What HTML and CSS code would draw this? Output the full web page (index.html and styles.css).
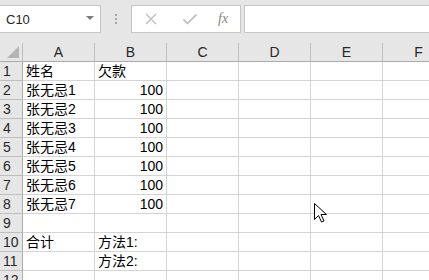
FILE: index.html
```html
<!DOCTYPE html>
<html lang="zh-CN">
  <head>
    <meta charset="UTF-8" />
    <title>Sheet</title>
    <link rel="stylesheet" href="styles.css">
  </head>
  <body>
    <div class="toolbar">
      <div class="namebox">
        <span>C10</span>
        <svg class="drop" width="8" height="5" viewBox="0 0 8 5"><path d="M0 0H8L4 4Z" fill="#7a7a7a"/></svg>
      </div>
      <div class="dots"><i></i><i></i><i></i></div>
      <div class="fx-buttons">
        <svg width="14" height="14" viewBox="0 0 14 14"><path d="M2 2L12 12M12 2L2 12" stroke="#c4c4c4" stroke-width="1.6"/></svg>
        <svg width="16" height="14" viewBox="0 0 16 14"><path d="M1.5 7.5L5.5 11.5L14.5 2.5" stroke="#c4c4c4" stroke-width="1.8" fill="none"/></svg>
        <span class="fx">fx</span>
      </div>
      <div class="formula"></div>
    </div>

    <div class="viewport">
      <div class="sheet">
        <div class="corner"><span class="tri"></span></div>
        <div class="colhead">A</div>
        <div class="colhead">B</div>
        <div class="colhead">C</div>
        <div class="colhead">D</div>
        <div class="colhead">E</div>
        <div class="colhead">F</div>

        <div class="rowhead">1</div><div class="cell">姓名</div><div class="cell">欠款</div><div class="cell"></div><div class="cell"></div><div class="cell"></div><div class="cell"></div>
        <div class="rowhead">2</div><div class="cell">张无忌1</div><div class="cell num">100</div><div class="cell"></div><div class="cell"></div><div class="cell"></div><div class="cell"></div>
        <div class="rowhead">3</div><div class="cell">张无忌2</div><div class="cell num">100</div><div class="cell"></div><div class="cell"></div><div class="cell"></div><div class="cell"></div>
        <div class="rowhead">4</div><div class="cell">张无忌3</div><div class="cell num">100</div><div class="cell"></div><div class="cell"></div><div class="cell"></div><div class="cell"></div>
        <div class="rowhead">5</div><div class="cell">张无忌4</div><div class="cell num">100</div><div class="cell"></div><div class="cell"></div><div class="cell"></div><div class="cell"></div>
        <div class="rowhead">6</div><div class="cell">张无忌5</div><div class="cell num">100</div><div class="cell"></div><div class="cell"></div><div class="cell"></div><div class="cell"></div>
        <div class="rowhead">7</div><div class="cell">张无忌6</div><div class="cell num">100</div><div class="cell"></div><div class="cell"></div><div class="cell"></div><div class="cell"></div>
        <div class="rowhead">8</div><div class="cell">张无忌7</div><div class="cell num">100</div><div class="cell"></div><div class="cell"></div><div class="cell"></div><div class="cell"></div>
        <div class="rowhead">9</div><div class="cell"></div><div class="cell"></div><div class="cell"></div><div class="cell"></div><div class="cell"></div><div class="cell"></div>
        <div class="rowhead">10</div><div class="cell">合计</div><div class="cell">方法1:</div><div class="cell"></div><div class="cell"></div><div class="cell"></div><div class="cell"></div>
        <div class="rowhead">11</div><div class="cell"></div><div class="cell">方法2:</div><div class="cell"></div><div class="cell"></div><div class="cell"></div><div class="cell"></div>
        <div class="rowhead">12</div><div class="cell"></div><div class="cell"></div><div class="cell"></div><div class="cell"></div><div class="cell"></div><div class="cell"></div>
      </div>
    </div>

    <svg class="pointer" width="13" height="20" viewBox="0 0 13 20">
      <path d="M0.5 0.5V16.5L4.5 12.5L7.5 19L10 18L7 11.5H12.5Z" fill="#fff" stroke="#000" stroke-width="1" stroke-linejoin="round"/>
    </svg>
  </body>
</html>
```

FILE: styles.css
```css
body {
  margin: 0;
  width: 429px;
  height: 280px;
  overflow: hidden;
  position: relative;
  background: #fff;
  font-family: "Liberation Sans", "Noto Sans CJK SC", sans-serif;
  font-size: 14px;
  color: #000;
}
.toolbar {
  display: flex;
  align-items: flex-start;
  height: 43px;
  padding-top: 5px;
  box-sizing: border-box;
  background: #e6e6e6;
}
.namebox {
  width: 101px;
  height: 28px;
  box-sizing: border-box;
  background: #fff;
  border: 1px solid #c6c6c6;
  border-left: none;
  display: flex;
  align-items: center;
  justify-content: space-between;
  padding: 0 6px 0 6px;
  font-size: 13px;
  color: #262626;
}
.drop {
  margin-top: -1px;
}
.dots {
  width: 30px;
  height: 28px;
  display: flex;
  flex-direction: column;
  align-items: center;
  justify-content: center;
  gap: 2px;
}
.dots i {
  width: 2px;
  height: 2px;
  background: #a6a6a6;
}
.fx-buttons {
  width: 110px;
  height: 28px;
  box-sizing: border-box;
  background: #fff;
  border: 1px solid #c6c6c6;
  display: flex;
  align-items: center;
  padding-left: 12px;
  gap: 24px;
}
.fx {
  font-family: "Liberation Serif", serif;
  font-style: italic;
  font-size: 14px;
  color: #858585;
  margin-left: -4px;
}
.formula {
  flex: 1;
  height: 28px;
  margin-left: 3px;
  box-sizing: border-box;
  background: #fff;
  border: 1px solid #c6c6c6;
  border-right: none;
}
.viewport {
  width: 429px;
  height: 237px;
  overflow: hidden;
}
.sheet {
  display: grid;
  grid-template-columns: 23px repeat(6, 72px);
  grid-auto-rows: 19px;
  width: 455px;
}
.sheet > div {
  box-sizing: border-box;
  line-height: 18px;
  white-space: nowrap;
  overflow: hidden;
}
.corner {
  background: #e6e6e6;
  border-right: 1px solid #bfbfbf;
  border-bottom: 1px solid #ababab;
  position: relative;
}
.tri {
  position: absolute;
  right: 3px;
  bottom: 3px;
  width: 0;
  height: 0;
  border-left: 12px solid transparent;
  border-bottom: 12px solid #b4b4b4;
}
.colhead {
  background: #e6e6e6;
  border-right: 1px solid #bfbfbf;
  border-bottom: 1px solid #ababab;
  text-align: center;
  color: #262626;
}
.rowhead {
  background: #e6e6e6;
  border-right: 1px solid #ababab;
  border-bottom: 1px solid #bfbfbf;
  padding-left: 3px;
  color: #262626;
}
.cell {
  border-right: 1px solid #d4d4d4;
  border-bottom: 1px solid #d4d4d4;
  padding: 0 3px;
}
.num {
  text-align: right;
}
.pointer {
  position: absolute;
  left: 314px;
  top: 203px;
}
```
